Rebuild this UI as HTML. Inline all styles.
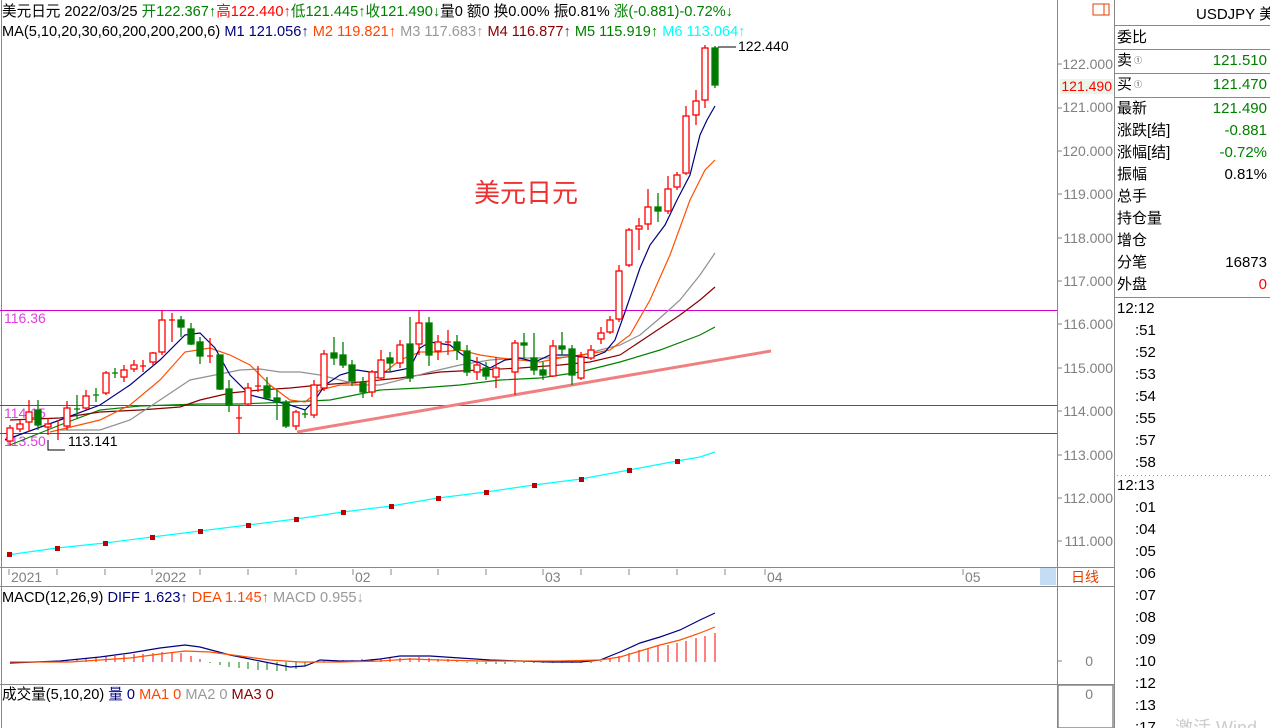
<!DOCTYPE html>
<html><head><meta charset="utf-8"><style>
body{margin:0;width:1270px;height:728px;overflow:hidden;background:#fff;font-family:"Liberation Sans","Noto Sans CJK SC",sans-serif;}
svg{position:absolute;left:0;top:0}
text{font-family:"Liberation Sans","Noto Sans CJK SC",sans-serif}
</style></head><body>
<svg width="1270" height="728" viewBox="0 0 1270 728">
<g font-size="14.6">
<text x="2" y="16"><tspan fill="#000">美元日元 2022/03/25 </tspan><tspan fill="#008000">开122.367↑</tspan><tspan fill="#f00">高122.440↑</tspan><tspan fill="#008000">低121.445↑</tspan><tspan fill="#008000">收121.490↓</tspan><tspan fill="#000">量0  额0  换0.00%  振0.81%  </tspan><tspan fill="#008000">涨(-0.881)-0.72%↓</tspan></text>
<text x="2" y="36"><tspan fill="#000">MA(5,10,20,30,60,200,200,200,6)   </tspan><tspan fill="#000080">M1 121.056↑  </tspan><tspan fill="#ff4500">M2 119.821↑  </tspan><tspan fill="#999">M3 117.683↑  </tspan><tspan fill="#8b0000">M4 116.877↑  </tspan><tspan fill="#008000">M5 115.919↑  </tspan><tspan fill="#0ff">M6 113.064↑</tspan></text>
</g>
<g stroke="#888" stroke-width="1" fill="none">
<line x1="1.5" y1="0" x2="1.5" y2="728"/>
<line x1="1057.5" y1="0" x2="1057.5" y2="728"/>
<line x1="1114.5" y1="0" x2="1114.5" y2="728"/>
<line x1="0" y1="567.5" x2="1114" y2="567.5"/>
<line x1="0" y1="586.5" x2="1114" y2="586.5"/>
<line x1="0" y1="684.5" x2="1114" y2="684.5"/>
</g>
<rect x="1058" y="685" width="55" height="43" fill="none" stroke="#888" stroke-width="1.5"/>
<rect x="1093" y="4" width="16" height="11" fill="none" stroke="#e04000"/><line x1="1104" y1="4" x2="1104" y2="15" stroke="#e04000"/>
<g stroke="#d000d0" stroke-width="1">
<line x1="0" y1="310.5" x2="1057" y2="310.5"/>
<line x1="0" y1="405.5" x2="1057" y2="405.5"/>
<line x1="0" y1="433.5" x2="1057" y2="433.5"/>
</g>
<g font-size="14" fill="#e040e0">
<text x="4" y="323">116.36</text><text x="4" y="418">114.15</text><text x="4" y="446">113.50</text>
</g>
<path d="M48 440 V450 H65" stroke="#000" fill="none"/>
<text x="68" y="446" font-size="14" fill="#000">113.141</text>
<path d="M718 47 H736" stroke="#000"/>
<text x="738" y="51" font-size="14" fill="#000">122.440</text>
<text x="474" y="202" font-size="26" fill="#f03030">美元日元</text>
<g font-size="14" fill="#808080" text-anchor="end">
<text x="1113" y="69">122.000</text><text x="1113" y="112">121.000</text><text x="1113" y="156">120.000</text><text x="1113" y="199">119.000</text><text x="1113" y="243">118.000</text><text x="1113" y="286">117.000</text><text x="1113" y="329">116.000</text><text x="1113" y="373">115.000</text><text x="1113" y="416">114.000</text><text x="1113" y="460">113.000</text><text x="1113" y="503">112.000</text><text x="1113" y="546">111.000</text>
<text x="1093" y="666">0</text><text x="1093" y="699">0</text>
</g>
<g stroke="#808080"><path d="M1058 64h4M1058 108h4M1058 151h4M1058 194h4M1058 238h4M1058 281h4M1058 324h4M1058 368h4M1058 411h4M1058 455h4M1058 498h4M1058 541h4M1058 661h4"/></g>
<rect x="1060" y="79" width="53" height="15" fill="#e8f5e8"/>
<text x="1112" y="91" font-size="14" fill="#f00" text-anchor="end">121.490</text>
<g stroke="#888"><path d="M9 569v6M57 569v6M105 569v6M152 569v6M200 569v6M248 569v6M296 569v6M353 569v6M391 569v6M438 569v6M486 569v6M543 569v6M581 569v6M629 569v6M677 569v6M725 569v6M765 569v6M963 569v6"/></g>
<g font-size="14" fill="#808080"><text x="11" y="582">2021</text><text x="155" y="582">2022</text><text x="355" y="582">02</text><text x="545" y="582">03</text><text x="767" y="582">04</text><text x="965" y="582">05</text></g>
<rect x="1040" y="568" width="16" height="17" fill="#c4dcf4"/>
<text x="1071" y="582" font-size="14" fill="#e04000">日线</text>
<g fill="none" stroke-width="1.2">
<polyline stroke="#008000" points="10,445 60,425 100,410 140,406 200,404 240,404 290,402 330,400 380,390 420,388 460,385 500,380 540,378 580,372 620,362 660,350 700,335 715,327"/>
<polyline stroke="#8b0000" points="10,420 60,418 100,412 140,410 180,407 200,400 230,393 260,390 290,388 320,385 360,382 400,378 440,372 480,370 520,368 560,365 590,362 620,355 650,335 680,315 700,300 715,287"/>
<polyline stroke="#909090" points="60,430 100,430 130,420 160,400 190,380 210,376 240,370 260,369 280,372 300,372 320,375 340,380 360,385 380,385 400,380 430,372 460,365 490,360 520,358 550,358 580,356 600,350 620,345 640,335 660,318 680,300 700,275 715,253"/>
<polyline stroke="#ff5000" points="50,432 100,420 130,405 160,380 185,352 210,348 230,355 250,365 270,385 290,400 305,402 320,390 340,385 360,385 380,376 400,360 420,352 440,352 460,350 480,355 500,358 520,360 540,362 560,358 580,355 600,352 610,350 630,335 650,300 670,255 690,200 705,170 715,160"/>
<polyline stroke="#000080" points="5,440 60,420 100,405 130,385 160,360 185,335 200,333 215,348 230,375 250,395 270,400 290,405 305,410 315,400 325,385 340,375 357,370 370,372 390,372 410,368 420,348 430,342 450,345 460,353 470,360 480,363 490,368 505,360 520,358 535,362 550,355 570,355 590,358 605,352 615,340 625,312 640,268 650,245 665,225 677,200 690,175 700,135 707,120 715,106"/>
<line x1="297" y1="432" x2="771" y2="351" stroke="#f08080" stroke-width="3"/>
<polyline stroke="#0ff" points="7,555 57,548 105,543 152,537 200,531 248,525 296,519 343,512 391,506 438,498 486,492 534,485 581,479 629,470 677,461 700,457 715,452"/>
</g>
<g fill="#c00000"><rect x="7" y="552" width="5" height="5"/><rect x="55" y="546" width="5" height="5"/><rect x="103" y="541" width="5" height="5"/><rect x="150" y="535" width="5" height="5"/><rect x="198" y="529" width="5" height="5"/><rect x="246" y="523" width="5" height="5"/><rect x="294" y="517" width="5" height="5"/><rect x="341" y="510" width="5" height="5"/><rect x="389" y="504" width="5" height="5"/><rect x="436" y="496" width="5" height="5"/><rect x="484" y="490" width="5" height="5"/><rect x="532" y="483" width="5" height="5"/><rect x="579" y="477" width="5" height="5"/><rect x="627" y="468" width="5" height="5"/><rect x="675" y="459" width="5" height="5"/></g>
<g stroke="#f00" stroke-width="1.3" fill="#fff">
<path d="M10 425V445M20 420V432M29 400V432M48 418V435M58 420V440M67 401V430M86 390V410M106 371V395M124 365V382M134 360V372M143 360V372M153 352V366M162 310V355M172 313V342M210 338V363M239 405V433M248 383V405M258 366V392M296 410V430M314 380V418M324 350V391M372 370V397M381 350V380M400 340V368M419 310V355M438 335V360M448 330V355M477 357V380M496 357V388M515 340V395M553 340V377M581 352V380M591 345V360M601 327V344M610 316V334M619 265V322M629 228V267M639 218V250M648 189V230M668 176V214M677 172V190M686 106V175M696 90V125M705 45V108"/>
<rect x="7" y="428" width="6" height="13"/><rect x="17" y="424" width="6" height="5"/><rect x="26" y="412" width="6" height="10"/><rect x="45" y="424" width="6" height="3"/><rect x="64" y="408" width="6" height="18"/><rect x="83" y="396" width="6" height="12"/><rect x="103" y="373" width="6" height="20"/><rect x="121" y="370" width="6" height="7"/><rect x="131" y="365" width="6" height="4"/><path d="M140 366h6M169 320h6M207 356h6M236 418h6M255 386h6M445 342h6"/><rect x="150" y="353" width="6" height="9"/><rect x="159" y="320" width="6" height="32"/><rect x="245" y="388" width="6" height="16"/><rect x="293" y="412" width="6" height="14"/><rect x="311" y="385" width="6" height="30"/><rect x="321" y="354" width="6" height="34"/><rect x="369" y="372" width="6" height="20"/><rect x="378" y="360" width="6" height="18"/><rect x="397" y="345" width="6" height="18"/><rect x="416" y="323" width="6" height="21"/><rect x="435" y="342" width="6" height="9"/><rect x="474" y="365" width="6" height="7"/><rect x="493" y="368" width="6" height="9"/><rect x="512" y="343" width="6" height="29"/><rect x="550" y="346" width="6" height="30"/><rect x="578" y="357" width="6" height="21"/><rect x="588" y="350" width="6" height="8"/><rect x="598" y="333" width="6" height="6"/><rect x="607" y="320" width="6" height="12"/><rect x="616" y="271" width="6" height="48"/><rect x="626" y="230" width="6" height="35"/><rect x="636" y="226" width="6" height="3"/><rect x="645" y="207" width="6" height="17"/><rect x="665" y="189" width="6" height="22"/><rect x="674" y="175" width="6" height="12"/><rect x="683" y="116" width="6" height="57"/><rect x="693" y="101" width="6" height="14"/><rect x="702" y="48" width="6" height="52"/>
</g>
<g stroke="#008000" stroke-width="1.3" fill="#007800">
<path d="M38 400V430M77 395V418M96 388V402M115 368V378M181 316V337M191 323V345M200 337V364M220 355V390M229 380V412M267 377V400M277 390V420M286 400V428M305 410V418M334 337V365M343 342V368M352 360V386M363 377V398M390 352V372M410 317V382M429 317V366M457 335V360M467 345V376M486 362V380M524 333V360M534 333V375M543 362V380M562 332V355M572 345V385M658 193V222M715 46V88"/>
<rect x="35" y="410" width="6" height="15"/><path d="M74 409h6M93 395h6M112 373h6"/><rect x="178" y="320" width="6" height="7"/><rect x="188" y="329" width="6" height="15"/><rect x="197" y="342" width="6" height="14"/><rect x="217" y="355" width="6" height="34"/><rect x="226" y="389" width="6" height="16"/><rect x="264" y="386" width="6" height="12"/><rect x="274" y="398" width="6" height="4"/><rect x="283" y="402" width="6" height="24"/><path d="M302 414h6"/><rect x="331" y="353" width="6" height="5"/><rect x="340" y="355" width="6" height="10"/><rect x="349" y="365" width="6" height="16"/><rect x="360" y="383" width="6" height="9"/><rect x="387" y="358" width="6" height="5"/><rect x="407" y="344" width="6" height="34"/><rect x="426" y="323" width="6" height="32"/><rect x="454" y="342" width="6" height="8"/><rect x="464" y="351" width="6" height="21"/><rect x="483" y="368" width="6" height="8"/><rect x="521" y="343" width="6" height="2"/><rect x="531" y="358" width="6" height="12"/><rect x="540" y="370" width="6" height="5"/><rect x="559" y="346" width="6" height="3"/><rect x="569" y="349" width="6" height="26"/><rect x="655" y="207" width="6" height="4"/><rect x="712" y="48" width="6" height="37"/>
</g>
<g font-size="14.6"><text x="2" y="602"><tspan fill="#000">MACD(12,26,9)   </tspan><tspan fill="#000080">DIFF 1.623↑ </tspan><tspan fill="#ff4500">DEA 1.145↑ </tspan><tspan fill="#999">MACD 0.955↓</tspan></text>
<text x="2" y="699"><tspan fill="#000">成交量(5,10,20)   </tspan><tspan fill="#000080">量 0 </tspan><tspan fill="#ff4500">MA1 0 </tspan><tspan fill="#999">MA2 0 </tspan><tspan fill="#8b0000">MA3 0</tspan></text></g>
<g stroke="#f00" stroke-width="1"><path d="M58 662v-1M67 662v-2M77 662v-3M86 662v-4M96 662v-5M106 662v-6M115 662v-6M124 662v-7M134 662v-8M143 662v-8M153 662v-9M162 662v-10M172 662v-10M181 662v-9M191 662v-6M200 662v-3M324 662v-1M334 662v-1M343 662v-2M352 662v-2M362 662v-3M372 662v-3M381 662v-3M390 662v-4M400 662v-4M410 662v-4M419 662v-5M429 662v-4M438 662v-3M448 662v-3M457 662v-2M601 662v-1M610 662v-3M619 662v-6M629 662v-9M639 662v-12M648 662v-14M658 662v-16M668 662v-17M677 662v-19M686 662v-21M696 662v-24M705 662v-26M715 662v-29"/></g>
<g stroke="#008000" stroke-width="1"><path d="M210 662v1M220 662v3M229 662v5M239 662v6M248 662v7M258 662v8M267 662v8M277 662v9M286 662v9M296 662v7M305 662v4M314 662v1M467 662v1M477 662v2M486 662v2M496 662v2M505 662v2M515 662v1M524 662v1M534 662v1M543 662v1M553 662v1M562 662v1M572 662v1M581 662v1M591 662v1"/></g>
<g fill="none" stroke-width="1.2">
<polyline stroke="#000080" points="10,663 60,661 100,657 130,653 160,648 185,645 200,647 230,655 260,661 290,667 305,666 320,660 340,661 360,661 380,659 400,656 430,656 460,658 490,660 520,661 550,662 580,662 600,660 620,652 640,643 660,637 680,630 700,620 715,613"/>
<polyline stroke="#ff5000" points="10,662 70,662 100,660 130,658 160,654 185,651 210,652 240,656 270,660 300,662 340,662 380,661 410,659 440,660 480,661 520,661 560,661 600,660 620,657 640,651 660,645 680,640 700,633 715,627"/>
</g>
<g font-size="15" fill="#000">
<text x="1196" y="19">USDJPY 美</text>
<text x="1117" y="42">委比</text><text x="1117" y="65">卖</text><text x="1117" y="89">买</text>
<text x="1117" y="113">最新</text><text x="1117" y="135">涨跌[结]</text><text x="1117" y="157">涨幅[结]</text><text x="1117" y="179">振幅</text><text x="1117" y="201">总手</text><text x="1117" y="223">持仓量</text><text x="1117" y="245">增仓</text><text x="1117" y="267">分笔</text><text x="1117" y="289">外盘</text>
</g>
<g font-size="8" fill="#333"><text x="1134" y="63">①</text><text x="1134" y="87">①</text></g>
<g font-size="15" text-anchor="end">
<text x="1267" y="65" fill="#008000">121.510</text><text x="1267" y="89" fill="#008000">121.470</text><text x="1267" y="113" fill="#008000">121.490</text><text x="1267" y="135" fill="#008000">-0.881</text><text x="1267" y="157" fill="#008000">-0.72%</text><text x="1267" y="179" fill="#000">0.81%</text><text x="1267" y="267" fill="#000">16873</text><text x="1267" y="289" fill="#f00">0</text>
</g>
<g stroke="#888"><path d="M1115 25.5H1270M1115 49.5H1270M1115 73.5H1270M1115 97.5H1270M1115 297.5H1270"/></g>
<line x1="1117" y1="475.5" x2="1270" y2="475.5" stroke="#999" stroke-dasharray="1,3"/>
<g font-size="15" fill="#000">
<text x="1117" y="313">12:12</text><text x="1135" y="335">:51</text><text x="1135" y="357">:52</text><text x="1135" y="379">:53</text><text x="1135" y="401">:54</text><text x="1135" y="423">:55</text><text x="1135" y="445">:57</text><text x="1135" y="467">:58</text>
<text x="1117" y="490">12:13</text><text x="1135" y="512">:01</text><text x="1135" y="534">:04</text><text x="1135" y="556">:05</text><text x="1135" y="578">:06</text><text x="1135" y="600">:07</text><text x="1135" y="622">:08</text><text x="1135" y="644">:09</text><text x="1135" y="666">:10</text><text x="1135" y="688">:12</text><text x="1135" y="710">:13</text><text x="1135" y="732">:17</text>
</g>
<text x="1175" y="734" font-size="18" fill="#ccc">激活 Wind</text>
</svg>
</body></html>
